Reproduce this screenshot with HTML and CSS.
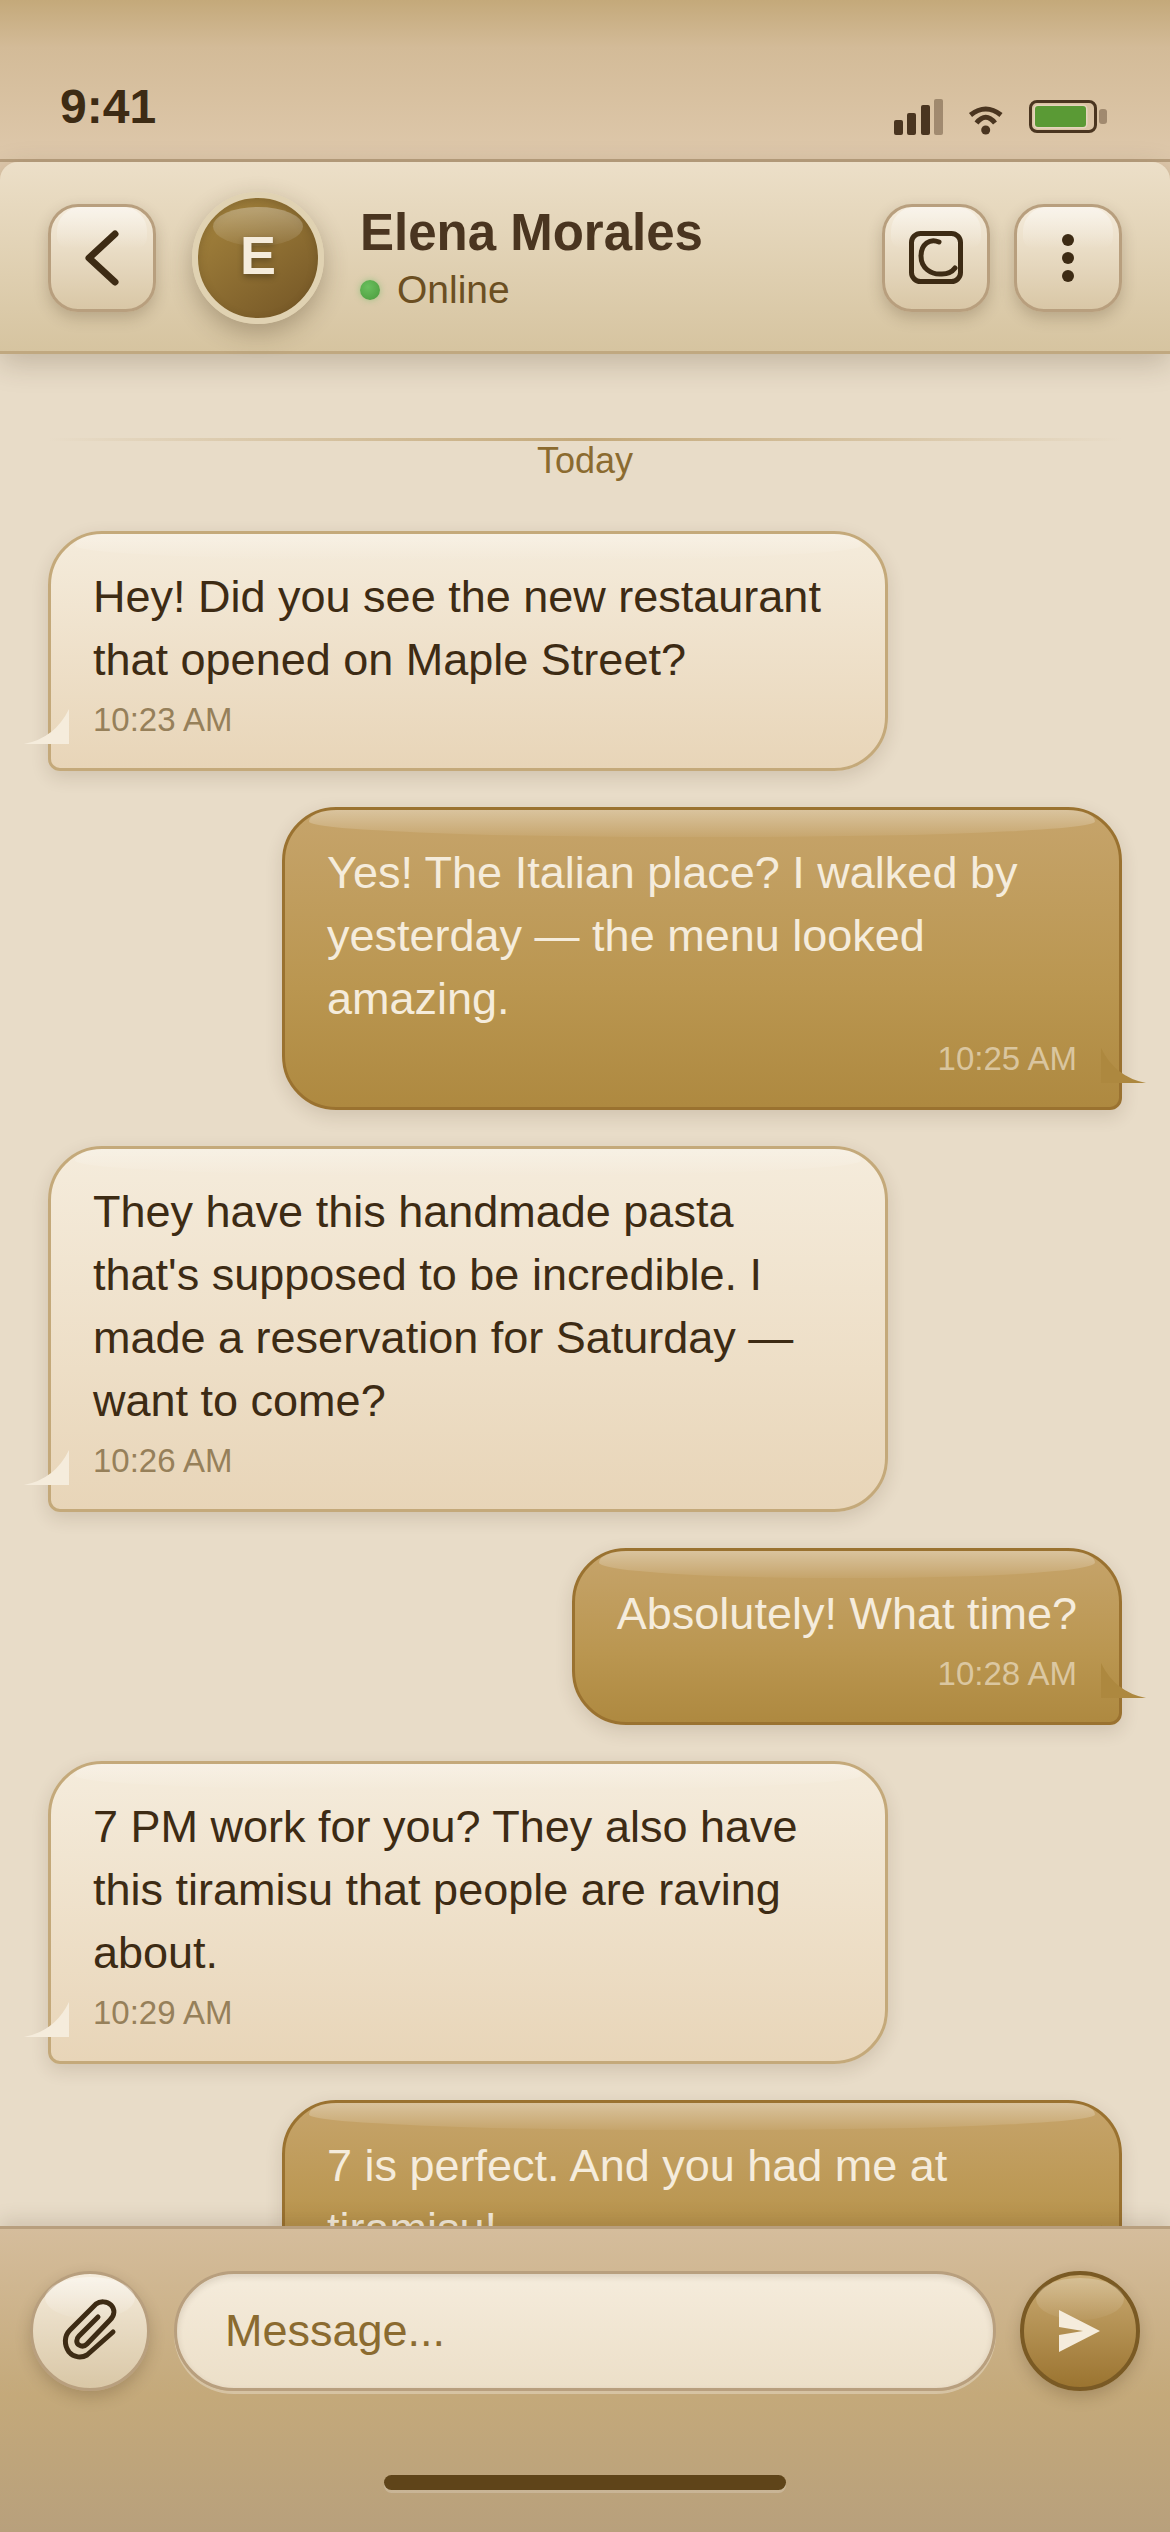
FILE: index.html
```html
<!DOCTYPE html>
<html lang="en">
  <head>
    <meta charset="UTF-8" />
    <meta name="viewport" content="width=device-width, initial-scale=1.0" />
    <title>Elena Morales</title>
    <link rel="stylesheet" href="styles.css">
  </head>
  <body>
    <div class="phone">
      <div class="status-bar">
        <span class="clock">9:41</span>
        <div class="status-icons">
          <div class="signal">
            <span class="bar bar-1"></span>
            <span class="bar bar-2"></span>
            <span class="bar bar-3"></span>
            <span class="bar bar-4"></span>
          </div>
          <svg class="wifi" width="42" height="31" viewBox="0 0 42 31" fill="none" stroke="#4a3520" stroke-width="5">
            <path d="M5.5 11Q20.7 -1 36 11" />
            <path d="M11.5 19Q20.7 7.5 30 19" />
            <circle cx="20.7" cy="26" r="4.5" fill="#4a3520" stroke="none" />
          </svg>
          <div class="battery">
            <div class="battery-body"><span class="battery-fill"></span></div>
            <span class="battery-tip"></span>
          </div>
        </div>
      </div>

      <header class="chat-header">
        <button class="icon-btn" type="button" aria-label="Back">
          <svg width="60" height="60" viewBox="0 0 60 60" fill="none" stroke="#3d2b14" stroke-width="7" stroke-linecap="round" stroke-linejoin="round">
            <path d="M43 6L17 30L43 54" />
          </svg>
        </button>
        <div class="avatar"><span>E</span></div>
        <div class="contact">
          <div class="contact-name">Elena Morales</div>
          <div class="contact-status"><span class="online-dot"></span>Online</div>
        </div>
        <div class="header-actions">
          <button class="icon-btn" type="button" aria-label="Call">
            <svg width="60" height="60" viewBox="0 0 60 60" fill="none" stroke="#3d2b14" stroke-width="5" stroke-linecap="round">
              <rect x="5.5" y="5.5" width="49" height="48" rx="9" />
              <path d="M33 14C24 10 15 16 15 28C15 40 25 47 36 46C42 46 46 44 49 40" />
            </svg>
          </button>
          <button class="icon-btn" type="button" aria-label="More">
            <svg width="60" height="60" viewBox="0 0 60 60" fill="#3d2b14">
              <circle cx="30" cy="12" r="6" />
              <circle cx="30" cy="30" r="6" />
              <circle cx="30" cy="48" r="6" />
            </svg>
          </button>
        </div>
      </header>

      <main class="messages">
        <div class="date-line"></div>
        <div class="date-label">Today</div>

        <div class="bubble received">
          <p>Hey! Did you see the new restaurant that opened on Maple Street?</p>
          <span class="time">10:23 AM</span>
        </div>
        <div class="bubble sent">
          <p>Yes! The Italian place? I walked by yesterday — the menu looked amazing.</p>
          <span class="time">10:25 AM</span>
        </div>
        <div class="bubble received">
          <p>They have this handmade pasta that's supposed to be incredible. I made a reservation for Saturday — want to come?</p>
          <span class="time">10:26 AM</span>
        </div>
        <div class="bubble sent">
          <p>Absolutely! What time?</p>
          <span class="time">10:28 AM</span>
        </div>
        <div class="bubble received">
          <p>7 PM work for you? They also have this tiramisu that people are raving about.</p>
          <span class="time">10:29 AM</span>
        </div>
        <div class="bubble sent">
          <p>7 is perfect. And you had me at tiramisu!</p>
        </div>
      </main>

      <footer class="composer">
        <div class="composer-row">
          <button class="round-btn attach-btn" type="button" aria-label="Attach">
            <svg width="64" height="64" viewBox="28 30 64 64" fill="none" stroke="#3d2b14" stroke-width="5" stroke-linecap="round" stroke-linejoin="round">
              <path d="M68 48L49 67C46 70 46 74 49 76C52 78 55 77 57 75L80 51C85 46 85 40 81 36C77 32 70 32 66 35L40 61C34 67 34 76 39 83C44 89 52 89 57 86L83 63" />
            </svg>
          </button>
          <div class="message-input">Message...</div>
          <button class="round-btn send-btn" type="button" aria-label="Send">
            <svg width="42" height="42" viewBox="0 0 42 42" fill="#f5ecdc">
              <path d="M0 0L41 21L0 42V25L24 21L0 17Z" />
            </svg>
          </button>
        </div>
        <div class="home-indicator"></div>
      </footer>
    </div>
  </body>
</html>
```

FILE: styles.css
```css
* {
  box-sizing: border-box;
}

body {
  margin: 0;
  font-family: "Liberation Sans", Arial, sans-serif;
  background-color: #e8dcc8;
  color: #3d2b14;
}

.phone {
  width: 1170px;
  height: 2532px;
  display: flex;
  flex-direction: column;
  overflow: hidden;
  background-color: #dec8ab;
}

/* status bar */
.status-bar {
  height: 162px;
  flex-shrink: 0;
  display: flex;
  justify-content: space-between;
  align-items: flex-end;
  padding: 0 63px 24px 60px;
  background: linear-gradient(180deg, #c4a97a 0%, #d3bb98 30%, #dec8ab 100%);
  border-bottom: 3px solid #b89f7e;
}

.clock {
  font-size: 48px;
  font-weight: 700;
  color: #3d2b14;
  margin-bottom: 1px;
}

.status-icons {
  display: flex;
  align-items: flex-end;
  gap: 22px;
}

.signal {
  display: flex;
  align-items: flex-end;
  gap: 4.5px;
}

.bar {
  width: 9px;
  border-radius: 2px;
  background-color: #4a3520;
}

.bar-1 {
  height: 15px;
}

.bar-2 {
  height: 22.5px;
}

.bar-3 {
  height: 30px;
}

.bar-4 {
  height: 36px;
  opacity: 0.4;
}

.wifi {
  display: block;
}

.battery {
  display: flex;
  align-items: center;
  gap: 2px;
  margin-bottom: 2px;
}

.battery-body {
  width: 68px;
  height: 33px;
  display: flex;
  align-items: center;
  padding-left: 3px;
  border: 3px solid #4a3520;
  border-radius: 8px;
}

.battery-fill {
  width: 51px;
  height: 21px;
  border-radius: 3px;
  background-color: #5a9a35;
  box-shadow: 0 0 0 1.5px rgba(245, 236, 220, 0.45);
}

.battery-tip {
  width: 8px;
  height: 15px;
  border-radius: 3px;
  background-color: #4a3520;
  opacity: 0.4;
}

/* header */
.chat-header {
  position: relative;
  z-index: 2;
  height: 192px;
  flex-shrink: 0;
  display: flex;
  align-items: center;
  padding: 30px 48px 27px;
  background: linear-gradient(180deg, #ecdfc8 0%, #d6c4a0 100%);
  border-bottom: 3px solid #c0a880;
  border-radius: 18px 18px 0 0;
  box-shadow: 0 9px 30px rgba(61, 43, 20, 0.22);
}

.icon-btn {
  position: relative;
  width: 108px;
  height: 108px;
  flex-shrink: 0;
  display: flex;
  align-items: center;
  justify-content: center;
  padding: 0;
  background: linear-gradient(180deg, #f5ecdc 0%, #d9c7a6 100%);
  border: 3px solid #b89f7e;
  border-radius: 30px;
  box-shadow: 0 6px 15px rgba(61, 43, 20, 0.22);
}

.icon-btn::before {
  content: "";
  position: absolute;
  top: 0;
  left: 6px;
  right: 6px;
  height: 42px;
  border-radius: 24px 24px 12px 12px;
  background: linear-gradient(180deg, rgba(255, 255, 255, 0.45), rgba(255, 255, 255, 0));
}

.icon-btn svg {
  position: relative;
}

.avatar {
  position: relative;
  width: 132px;
  height: 132px;
  flex-shrink: 0;
  margin-left: 36px;
  padding-bottom: 6px;
  display: flex;
  align-items: center;
  justify-content: center;
  border: 6px solid #e0d2b2;
  border-radius: 50%;
  background: linear-gradient(145deg, #a8873f 0%, #735525 100%);
  box-shadow: 0 9px 24px rgba(61, 43, 20, 0.3), inset 0 3px 9px rgba(61, 43, 20, 0.25);
  font-size: 54px;
  font-weight: 700;
  color: #f5ecdc;
  text-shadow: 0 3px 6px rgba(0, 0, 0, 0.3);
}

.avatar::before {
  content: "";
  position: absolute;
  top: 9px;
  left: 15px;
  right: 15px;
  height: 39px;
  border-radius: 50%;
  background: linear-gradient(180deg, rgba(255, 255, 255, 0.3), rgba(255, 255, 255, 0.06));
}

.avatar span {
  position: relative;
}

.contact {
  margin-left: 36px;
  flex: 1;
}

.contact-name {
  font-size: 51px;
  font-weight: 700;
  line-height: 60px;
  color: #4a3520;
}

.contact-status {
  display: flex;
  align-items: center;
  gap: 17px;
  margin-top: 3px;
  font-size: 39px;
  line-height: 48px;
  color: #6b4f22;
}

.online-dot {
  width: 20px;
  height: 20px;
  border-radius: 50%;
  background: radial-gradient(circle at 40% 35%, #6abf5e, #4a9a3c);
  box-shadow: 0 0 6px rgba(92, 184, 92, 0.5);
}

.header-actions {
  display: flex;
  gap: 24px;
}

/* messages */
.messages {
  flex: 1;
  min-height: 0;
  overflow: hidden;
  display: flex;
  flex-direction: column;
  gap: 36px;
  padding: 84px 48px 0;
  background-color: #e8dcc8;
}

.date-line {
  height: 3px;
  flex-shrink: 0;
  margin-bottom: -36px;
  background: linear-gradient(90deg, transparent, #c4a97a 50%, transparent);
}

.date-label {
  flex-shrink: 0;
  margin-bottom: 14px;
  text-align: center;
  font-size: 36px;
  line-height: 40px;
  color: #8b6b30;
}

.bubble {
  position: relative;
  flex-shrink: 0;
  max-width: 840px;
  padding: 31px 42px 24px;
  border: 3px solid;
  box-shadow: 0 6px 18px rgba(61, 43, 20, 0.14);
}

.bubble p {
  margin: 0;
  font-size: 45px;
  line-height: 63px;
}

.time {
  display: block;
  margin-top: 5px;
  font-size: 33px;
  line-height: 48px;
}

/* gloss across the top edge */
.bubble::before {
  content: "";
  position: absolute;
  top: 0;
  left: 24px;
  right: 24px;
  height: 27px;
  border-radius: 30px 30px 50% 50% / 12px 12px 60% 60%;
}

/* little curled tail */
.bubble::after {
  content: "";
  position: absolute;
  bottom: 24px;
  width: 45px;
  height: 35px;
}

.received {
  align-self: flex-start;
  background: linear-gradient(180deg, #f5ecdc 0%, #e8d5b8 100%);
  border-color: #c4a97a;
  border-radius: 54px 54px 54px 12px;
  color: #3d2b14;
}

.received .time {
  color: #96805a;
}

.received::before {
  background: linear-gradient(180deg, rgba(255, 255, 255, 0.25), rgba(255, 255, 255, 0));
}

.received::after {
  left: -27px;
  background-color: #f5ecdc;
  clip-path: path("M45 0Q31 29 0 35L45 35Z");
}

.sent {
  align-self: flex-end;
  background: linear-gradient(180deg, #c6a46b 0%, #ba9650 60%, #ae8940 100%);
  border-color: #9a7230;
  border-radius: 54px 54px 12px 54px;
  color: #f5ecdc;
}

.sent .time {
  text-align: right;
  color: rgba(245, 236, 220, 0.6);
}

.sent::before {
  background: linear-gradient(180deg, rgba(255, 255, 255, 0.34), rgba(255, 255, 255, 0.05));
}

.sent::after {
  right: -27px;
  background-color: #ad883f;
  clip-path: path("M0 0Q14 29 45 35L0 35Z");
}

/* composer */
.composer {
  position: relative;
  z-index: 2;
  height: 306px;
  flex-shrink: 0;
  padding: 42px 30px 0;
  background: linear-gradient(180deg, #d5bd9c 0%, #c4a97a 55%, #b8a07c 100%);
  border-top: 3px solid #b89f7e;
  box-shadow: 0 -6px 18px rgba(61, 43, 20, 0.14);
}

.composer-row {
  display: flex;
  align-items: center;
  gap: 24px;
}

.round-btn {
  position: relative;
  width: 120px;
  height: 120px;
  flex-shrink: 0;
  display: flex;
  align-items: center;
  justify-content: center;
  padding: 0;
  border-radius: 50%;
  border: 3px solid;
  box-shadow: 0 6px 15px rgba(61, 43, 20, 0.22);
}

.round-btn::before {
  content: "";
  position: absolute;
  top: 3px;
  left: 12px;
  right: 12px;
  height: 42px;
  border-radius: 50%;
}

.round-btn svg {
  position: relative;
}

.attach-btn {
  background: linear-gradient(180deg, #f5ecdc 0%, #d9c7a6 100%);
  border-color: #b89f7e;
}

.attach-btn::before {
  background: linear-gradient(180deg, rgba(255, 255, 255, 0.45), rgba(255, 255, 255, 0.05));
}

.send-btn {
  background: linear-gradient(180deg, #c9aa72 0%, #9b7430 100%);
  border: 4px solid #7a5a24;
}

.send-btn::before {
  background: linear-gradient(180deg, rgba(255, 255, 255, 0.25), rgba(255, 255, 255, 0.04));
}

.message-input {
  flex: 1;
  height: 120px;
  display: flex;
  align-items: center;
  padding: 0 48px;
  font-size: 45px;
  color: #8b6b30;
  background: linear-gradient(180deg, #f5ecdc 0%, #ecdfc8 100%);
  border: 3px solid #b89f7e;
  border-radius: 60px;
  box-shadow: inset 0 3px 6px rgba(61, 43, 20, 0.14), 0 3px 0 rgba(255, 255, 255, 0.3);
}

.home-indicator {
  width: 402px;
  height: 15px;
  margin: 84px auto 0;
  border-radius: 9px;
  background-color: #5f4419;
  box-shadow: 0 3px 0 rgba(255, 255, 255, 0.2);
}
```
